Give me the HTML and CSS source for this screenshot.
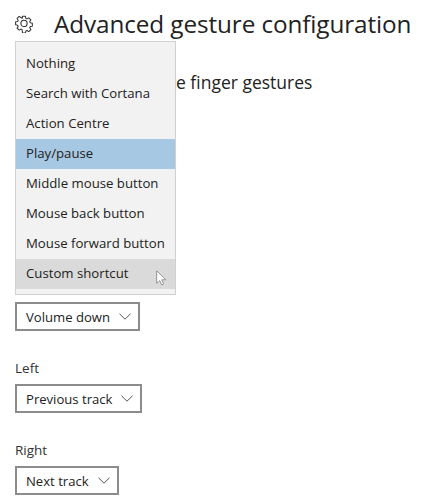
FILE: index.html
```html
<!DOCTYPE html>
<html lang="en">
<head>
<meta charset="utf-8">
<title>Advanced gesture configuration</title>
<link rel="stylesheet" href="styles.css">
</head>
<body>
<main class="page">
  <header class="header">
    <svg class="gear" viewBox="0 0 18 18" width="18" height="18" aria-hidden="true">
      <path d="M7.4 1h3.2l.4 2.2 1.3.6 1.9-1.2 2.2 2.2-1.2 1.9.6 1.3 2.2.4v3.2l-2.2.4-.6 1.3 1.2 1.9-2.2 2.2-1.9-1.2-1.3.6-.4 2.2H7.4L7 15.3l-1.3-.6-1.9 1.2-2.2-2.2 1.2-1.9-.6-1.3L0 10.1V6.9l2.2-.4.6-1.3-1.2-1.9 2.2-2.2 1.9 1.2L7 3.2z" transform="translate(.6 .4) scale(.93)" fill="none" stroke="#333" stroke-width="1.1" stroke-linejoin="round"/>
      <circle cx="9" cy="8.4" r="3.1" fill="none" stroke="#333" stroke-width="1.1"/>
    </svg>
    <h1 class="title">Advanced gesture configuration</h1>
  </header>
  <h2 class="section">e finger gestures</h2>
  <div class="field field-first">
    <button class="select" type="button">Volume down <svg class="chev" viewBox="0 0 12 7" width="12" height="7" aria-hidden="true"><path d="M.5.8 6 6.2 11.5.8" fill="none" stroke="#555" stroke-width="1"/></svg></button>
  </div>
  <div class="field">
    <div class="label">Left</div>
    <button class="select" type="button">Previous track <svg class="chev" viewBox="0 0 12 7" width="12" height="7" aria-hidden="true"><path d="M.5.8 6 6.2 11.5.8" fill="none" stroke="#555" stroke-width="1"/></svg></button>
  </div>
  <div class="field">
    <div class="label">Right</div>
    <button class="select" type="button">Next track <svg class="chev" viewBox="0 0 12 7" width="12" height="7" aria-hidden="true"><path d="M.5.8 6 6.2 11.5.8" fill="none" stroke="#555" stroke-width="1"/></svg></button>
  </div>
  <ul class="menu">
    <li class="item">Nothing</li>
    <li class="item">Search with Cortana</li>
    <li class="item">Action Centre</li>
    <li class="item selected">Play/pause</li>
    <li class="item">Middle mouse button</li>
    <li class="item">Mouse back button</li>
    <li class="item">Mouse forward button</li>
    <li class="item hover">Custom shortcut
      <svg class="cursor" viewBox="0 0 11 16" width="11" height="16" aria-hidden="true"><path d="M.7.8v12.6l3-2.8 2 4.3 2-1-2-4.1h4.2z" fill="#fff" stroke="#8a8a8a" stroke-width=".9" stroke-linejoin="round"/></svg>
    </li>
  </ul>
</main>
</body>
</html>
```
FILE: styles.css
```css
* { box-sizing: border-box; }
html, body { margin: 0; background: #fff; }
body { font-family: "Open Sans", "Noto Sans", "Liberation Sans", sans-serif; color: #222; }
.page { position: relative; width: 422px; height: 500px; padding: 9px 0 0 15px; overflow: hidden; }
.header { display: flex; align-items: center; gap: 21px; height: 30px; }
.gear { flex: none; }
.title { margin: 0; font-size: 24.3px; font-weight: 400; line-height: 30px; white-space: nowrap; color: #222; letter-spacing: -.1px; }
.section { margin: 31px 0 0 161px; font-size: 17.5px; font-weight: 400; line-height: 24px; color: #222; }
.field { margin-top: 28px; }
.field-first { margin-top: 208px; }
.label { font-size: 13.5px; line-height: 18px; margin-bottom: 7px; color: #333; }
.select { display: inline-flex; align-items: center; gap: 9px; height: 29px; padding: 0 7px 0 9px; background: #fff; border: 2px solid #8c8c8c; font: inherit; font-size: 13.1px; color: #222; }
.chev { flex: none; }
.menu { position: absolute; left: 15px; top: 41px; width: 161px; height: 254px; margin: 0; padding: 7px 0 0; list-style: none; background: #f2f2f2; border: 1px solid #d0d0d0; }
.item { position: relative; height: 30px; padding-left: 10px; font-size: 13.2px; line-height: 28px; color: #222; white-space: nowrap; }
.selected { background: #a6c8e3; }
.hover { background: #dadada; }
.cursor { position: absolute; left: 140px; top: 11px; }
```
